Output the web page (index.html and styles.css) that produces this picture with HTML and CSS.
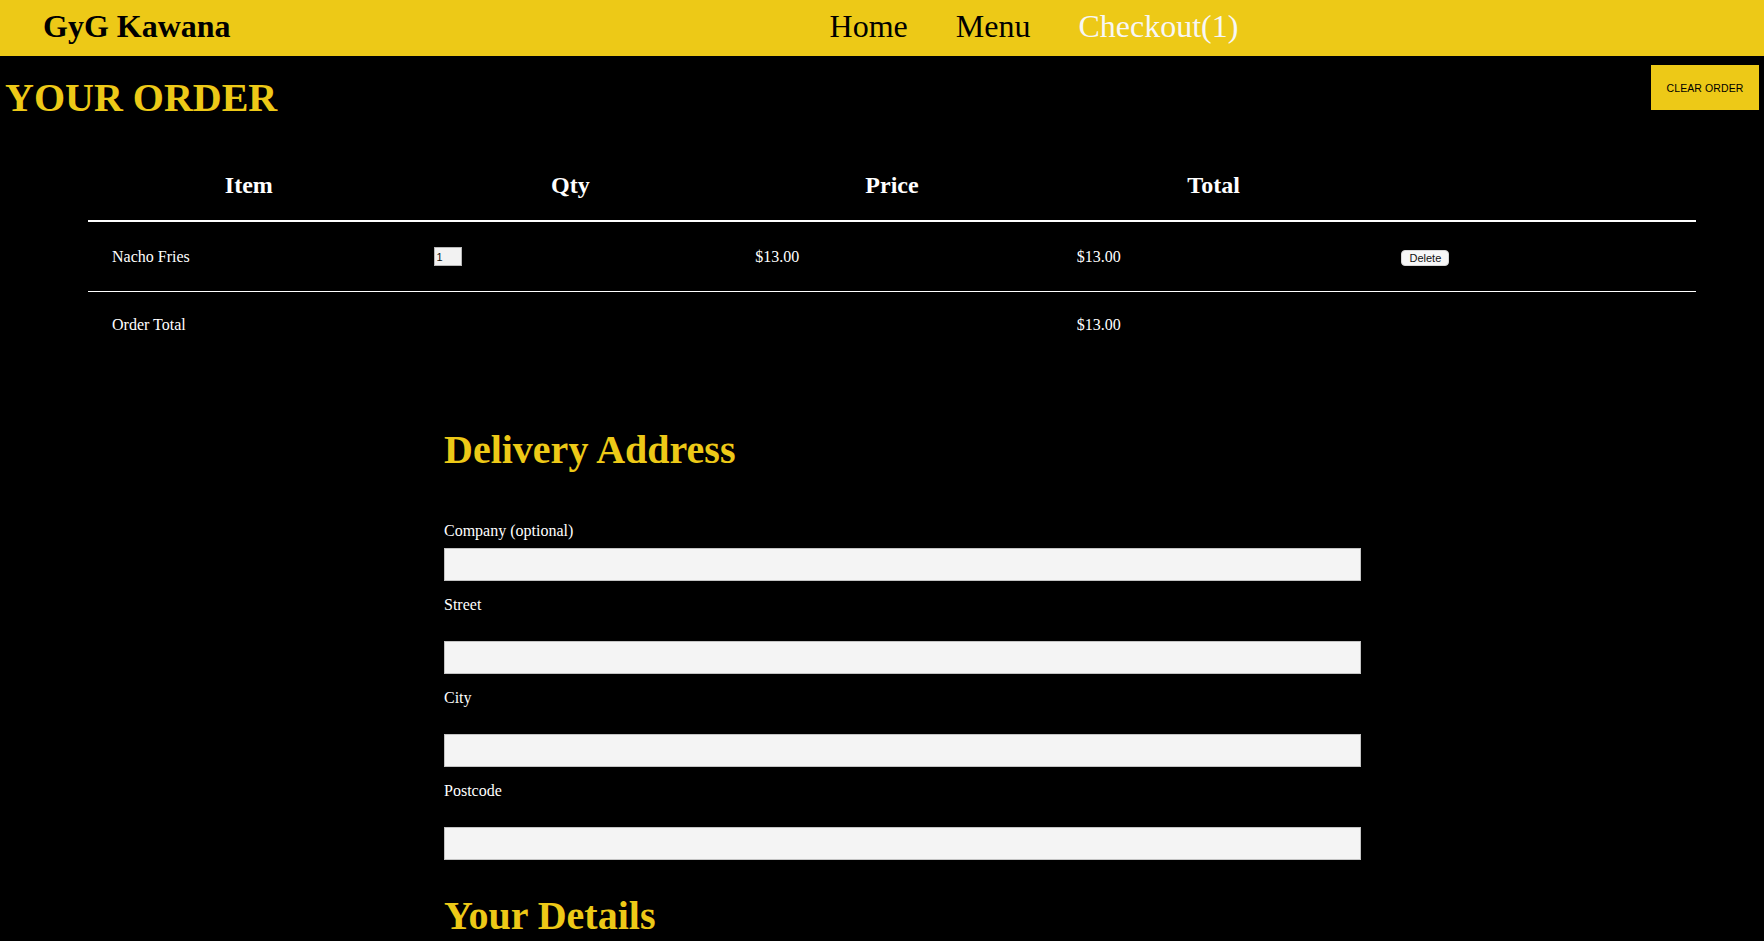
FILE: index.html
```html
<!DOCTYPE html>
<html lang="en">
<head>
<meta charset="utf-8">
<title>GyG Kawana - Checkout</title>
<link rel="stylesheet" href="styles.css">
</head>
<body>
<header class="navbar">
  <div class="brand">GyG Kawana</div>
  <nav class="nav-links">
    <a class="nav-link" href="#">Home</a>
    <a class="nav-link" href="#">Menu</a>
    <a class="nav-link nav-link-active" href="#">Checkout(1)</a>
  </nav>
</header>

<main class="page">
  <div class="order-head">
    <h1 class="order-title">YOUR ORDER</h1>
    <button class="clear-btn" type="button">CLEAR ORDER</button>
  </div>

  <table class="order-table">
    <thead>
      <tr>
        <th>Item</th>
        <th>Qty</th>
        <th>Price</th>
        <th>Total</th>
        <th></th>
      </tr>
    </thead>
    <tbody>
      <tr class="item-row">
        <td>Nacho Fries</td>
        <td><input class="qty-input" type="text" value="1"></td>
        <td>$13.00</td>
        <td>$13.00</td>
        <td><button class="delete-btn" type="button">Delete</button></td>
      </tr>
      <tr>
        <td>Order Total</td>
        <td></td>
        <td></td>
        <td>$13.00</td>
        <td></td>
      </tr>
    </tbody>
  </table>

  <form class="checkout-form">
    <h2 class="section-title">Delivery Address</h2>
    <div class="field field-first">
      <label class="field-label">Company (optional)</label>
      <input class="field-input" type="text">
    </div>
    <div class="field">
      <label class="field-label">Street</label>
      <input class="field-input" type="text">
    </div>
    <div class="field">
      <label class="field-label">City</label>
      <input class="field-input" type="text">
    </div>
    <div class="field">
      <label class="field-label">Postcode</label>
      <input class="field-input" type="text">
    </div>

    <h2 class="section-title section-title-next">Your Details</h2>
    <div class="field field-first">
      <label class="field-label">Name</label>
      <input class="field-input" type="text">
    </div>
    <div class="field">
      <label class="field-label">Phone</label>
      <input class="field-input" type="text">
    </div>
    <div class="field">
      <label class="field-label">Email</label>
      <input class="field-input" type="text">
    </div>
  </form>
</main>
</body>
</html>
```

FILE: styles.css
```css
html, body {
  margin: 0;
  padding: 0;
  background: #000;
}

body {
  font-family: "Liberation Serif", "Times New Roman", Times, serif;
  color: #fff;
}

/* ---------- top bar ---------- */
.navbar {
  box-sizing: border-box;
  height: 56px;
  padding: 0 0 4px 43px;
  background: #edc917;
  display: flex;
  align-items: center;
}

.brand {
  font-size: 32px;
  font-weight: bold;
  color: #000;
}

.nav-links {
  display: flex;
  gap: 48px;
  margin-left: 599px;
}

.nav-link {
  font-size: 32px;
  color: #000;
  text-decoration: none;
}

.nav-link-active {
  color: #f7f7f7;
}

/* ---------- order header ---------- */
.order-head {
  display: flex;
  justify-content: space-between;
  align-items: flex-start;
  padding: 0 5px 0 5px;
}

.order-title {
  margin: 19px 0 0;
  font-size: 40px;
  line-height: 46px;
  font-weight: bold;
  color: #edc917;
}

.clear-btn {
  margin-top: 9px;
  width: 108px;
  height: 45px;
  padding: 0;
  border: none;
  background: #edc917;
  color: #000;
  font-family: "Liberation Sans", Arial, sans-serif;
  font-size: 10.5px;
  letter-spacing: 0.1px;
}

/* ---------- order table ---------- */
.order-table {
  margin: 27px 0 0 88px;
  width: 1608px;
  table-layout: fixed;
  border-collapse: collapse;
}

.order-table th {
  padding: 24px 0 21px;
  font-size: 24px;
  font-weight: bold;
  text-align: center;
  border-bottom: 2px solid #fff;
}

.order-table td {
  padding: 24px 24px;
  font-size: 16px;
  text-align: left;
  vertical-align: middle;
}

.item-row td {
  height: 21px;
  border-bottom: 1px solid #fff;
}

.qty-input {
  box-sizing: border-box;
  width: 28px;
  height: 19px;
  margin: 0;
  padding: 0 2px;
  border: 1px solid #b8b8b8;
  background: #f2f2f2;
  color: #111;
  font-family: "Liberation Sans", Arial, sans-serif;
  font-size: 11px;
  vertical-align: middle;
}

.delete-btn {
  box-sizing: border-box;
  height: 16px;
  width: 48px;
  margin-left: 3px;
  padding: 0;
  border: 1px solid #d6d6d6;
  border-radius: 4px;
  background: #f7f7f7;
  color: #111;
  font-family: "Liberation Sans", Arial, sans-serif;
  font-size: 11px;
  line-height: 14px;
  vertical-align: middle;
}

/* ---------- checkout form ---------- */
.checkout-form {
  width: 917px;
  margin: 69px 0 0 444px;
  padding-bottom: 60px;
}

.section-title {
  margin: 0;
  font-size: 40px;
  line-height: 46px;
  font-weight: bold;
  color: #edc917;
}

.section-title-next {
  margin-top: 33px;
}

.field {
  margin-top: 15px;
}

.field-first {
  margin-top: 49px;
}

.field-label {
  display: block;
  font-size: 16px;
  line-height: 18px;
  color: #fff;
  margin-bottom: 27px;
}

.field-first .field-label {
  margin-bottom: 8px;
}

.field-input {
  display: block;
  box-sizing: border-box;
  width: 100%;
  height: 33px;
  margin: 0;
  border: 1px solid #c3c3c3;
  background: #f4f4f4;
}
```
